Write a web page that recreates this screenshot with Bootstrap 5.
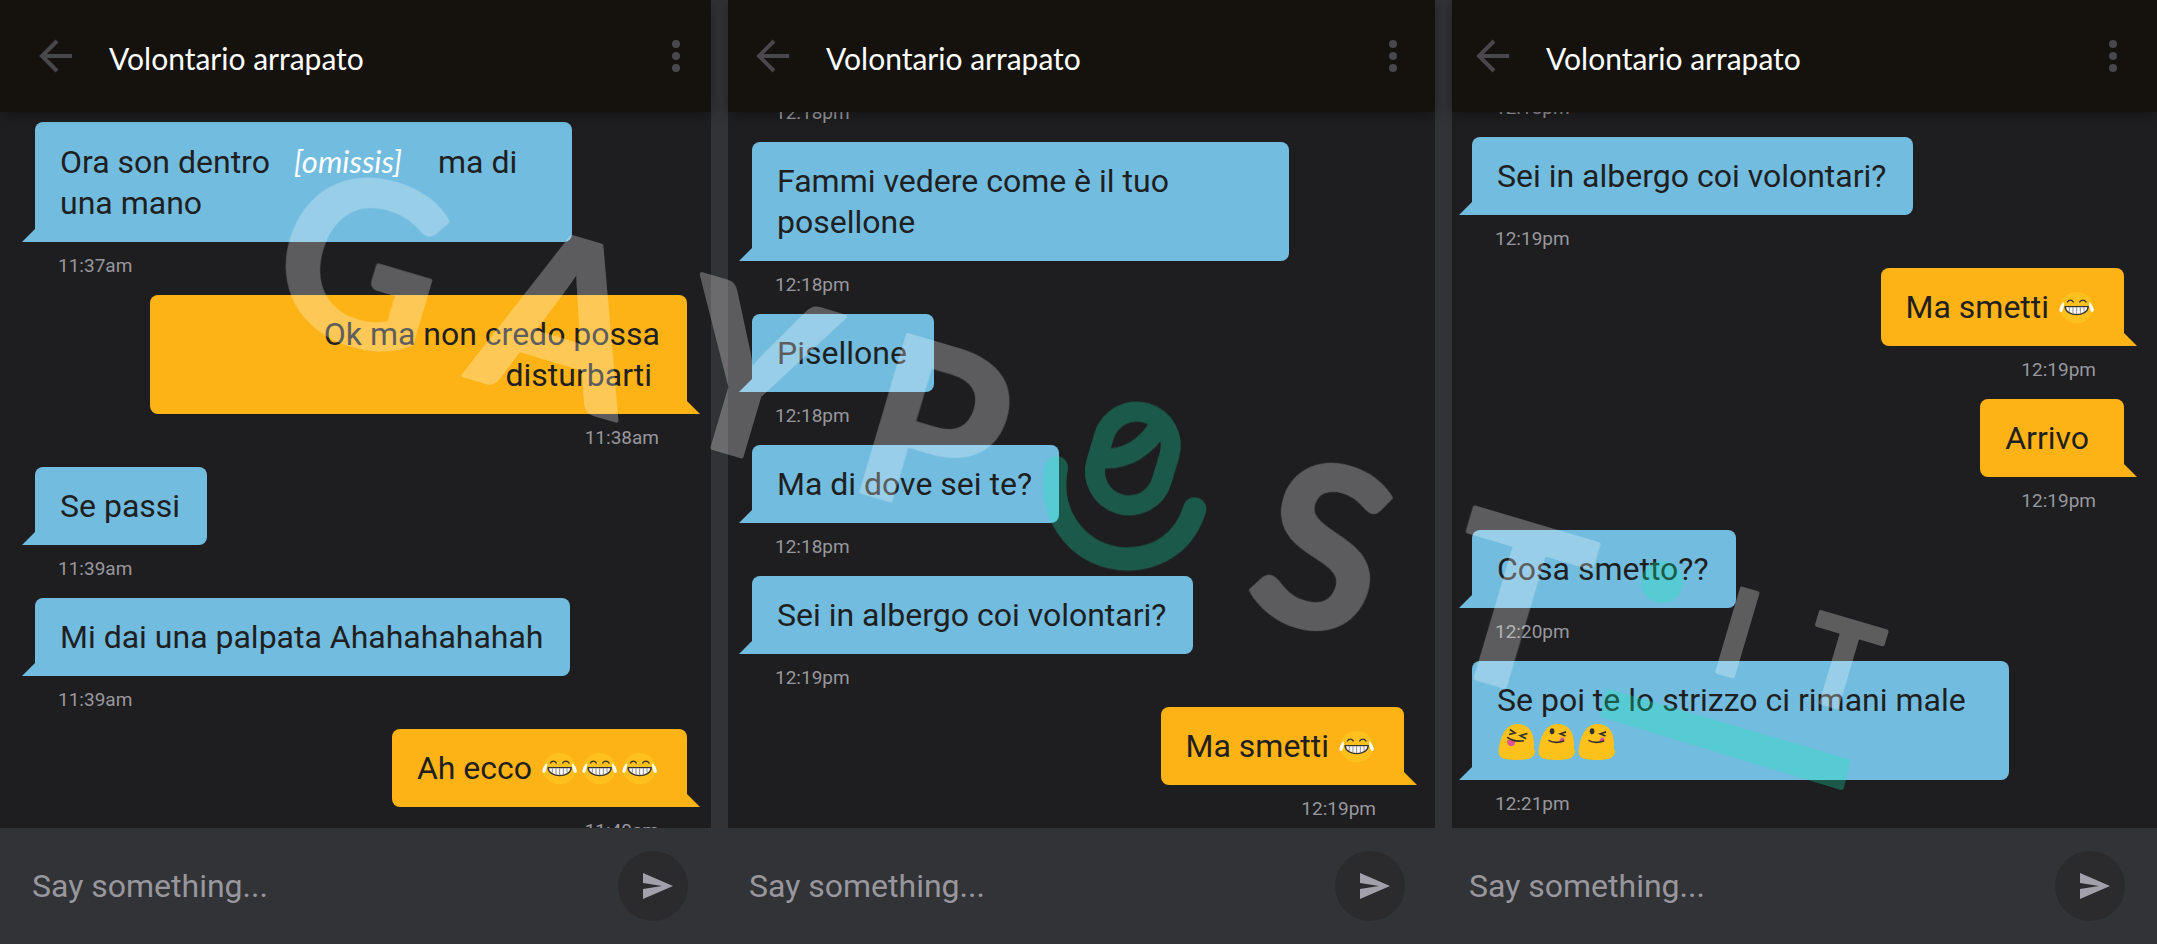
<!DOCTYPE html>
<html lang="it">
<head>
<meta charset="utf-8">
<meta name="viewport" content="width=device-width, initial-scale=1">
<title>Volontario arrapato</title>
<link rel="stylesheet" href="https://cdn.jsdelivr.net/npm/bootstrap@5.3.0/dist/css/bootstrap.min.css">
<style>
  body { background: #323336; font-family: Roboto, "Liberation Sans", sans-serif; color: #1f1f21; }
  .board { display: grid; grid-template-columns: 711fr 707fr 705fr; grid-template-rows: minmax(0, 1fr); column-gap: 17px; height: 100vh; }
  /* each screen has its own side insets and scroll offset */
  .screen { --inset-l: 24px; --inset-r: 31px; --scroll: 10px; background: #1e1e20; min-width: 0; min-height: 0; }
  .screen-a { --inset-l: 35px; --inset-r: 24px; --scroll: 32px; }
  .screen-c { --inset-l: 20px; --inset-r: 33px; --scroll: 5px; }
  .topbar { height: 112px; background: #15120e; padding-left: var(--inset-l); padding-right: var(--inset-r); box-shadow: 0 2px 12px rgba(0,0,0,.35); z-index: 1; }
  .topbar h1 { font: 400 30px/40px Lato, "Open Sans", sans-serif; color: #fff; padding-top: 4px; }
  .icon-btn { border: 0; background: none; padding: 0; line-height: 0; color: #48474c; }
  .back-btn { margin-left: 4px; margin-right: 36px; }
  .more-btn { margin-right: 6px; }
  .thread { min-height: 0; padding-left: var(--inset-l); padding-right: var(--inset-r); }
  .thread-inner { margin-bottom: calc(-1 * var(--scroll)); }
  .bubble { max-width: 537px; padding: 19px 27px 18px 25px; border-radius: 8px; font-size: 32px; line-height: 41px; background: #71bcdf; }
  .bubble::after { content: ""; position: absolute; bottom: 0; left: -13px; width: 13px; height: 13px; background: inherit; clip-path: polygon(100% 0, 100% 100%, 0 100%); }
  .msg-in .bubble { border-bottom-left-radius: 0; }
  .msg-out .bubble { background: #fdb315; border-bottom-right-radius: 0; text-align: right; }
  .msg-out .bubble::after { left: auto; right: -13px; clip-path: polygon(0 0, 100% 100%, 0 100%); }
  .stamp { font-size: 19px; line-height: 24px; margin: 12px 28px 17px 23px; color: #98979d; }
  .omissis { font-family: Lato, sans-serif; font-style: italic; color: #fff; font-size: 31px; margin: 0 28px 0 16px; }
  .emo { width: 40px; height: 36px; vertical-align: -8px; }
  .composer { height: 116px; background: #323336; padding-left: calc(var(--inset-l) - 3px); padding-right: calc(var(--inset-r) - 1px); }
  .composer input, .composer input:focus { background: none; border: 0; box-shadow: none; padding: 0; font-size: 32px; line-height: 40px; color: #98979d; }
  .composer input::placeholder { color: #98979d; opacity: 1; }
  .send-btn { width: 70px; height: 70px; background: #2b2b2d; color: #a2a0aa; padding-left: 10px; }
  .watermark { width: 100%; height: auto; font-family: Lato, sans-serif; font-weight: 700; pointer-events: none; z-index: 2; }
  .wm-white { fill: #fff; stroke: #fff; stroke-width: 4px; stroke-linejoin: round; opacity: .28; }
  .wm-big { font-size: 226px; }
  .wm-small { font-size: 120px; }
  .wm-green { opacity: .29; }
</style>
</head>
<body>
<svg width="0" height="0" class="position-absolute" aria-hidden="true">
  <symbol id="laugh" viewBox="60 32 120 108">
    <ellipse cx="119" cy="85" rx="50" ry="47" fill="#fec01c"/>
    <path d="M90 69Q100 56 110 69M127 69Q138 56 148 69" fill="none" stroke="#38352e" stroke-width="4"/>
    <path d="M84 82H154C151 114 87 114 84 82Z" fill="#fff" stroke="#38352e" stroke-width="4" stroke-linejoin="round"/>
    <path d="M97 84V97M108 84V103M119 84V105M130 84V103M141 84V97" stroke="#55514a" stroke-width="2"/>
    <path d="M79 68C83 74 79 98 72 98C64 97 66 84 79 68ZM158 68C154 74 159 98 166 98C174 97 171 84 158 68Z" fill="#fff"/>
  </symbol>
  <symbol id="blob" viewBox="50 70 120 110">
    <path d="M54 158C55 118 72 70 110 70C151 70 164 101 162 144C162 150 167 151 165 156C162 172 150 180 108 180C66 179 54 173 54 158Z" fill="#fdc11c"/>
  </symbol>
  <symbol id="squint" viewBox="50 70 120 110">
    <use href="#blob" x="50" y="70" width="120" height="110"/>
    <path d="M80 118L104 121Q107 137 92 138Q78 137 80 118Z" fill="#dd5596"/>
    <path d="M88 87L104 97L86 102M142 99L120 106L138 115M80 110Q100 126 131 121" fill="none" stroke="#33302b" stroke-width="5"/>
  </symbol>
  <symbol id="yum" viewBox="50 70 120 110">
    <use href="#blob" x="50" y="70" width="120" height="110"/>
    <path d="M117 122Q119 110 129 111Q137 117 129 124Z" fill="#dd5596"/>
    <ellipse cx="95" cy="92" rx="7" ry="9" fill="#33302b"/>
    <path d="M138 94L120 100L136 107M84 120Q105 132 132 121" fill="none" stroke="#33302b" stroke-width="5"/>
  </symbol>
  <symbol id="back" viewBox="0 0 34 34"><path d="M18 2L3 17L18 32M3 17H33" fill="none" stroke="currentColor" stroke-width="4"/></symbol>
  <symbol id="more" viewBox="0 0 10 34"><g fill="currentColor"><circle cx="5" cy="5" r="4"/><circle cx="5" cy="17" r="4"/><circle cx="5" cy="29" r="4"/></g></symbol>
  <symbol id="send" viewBox="0 0 30 26"><path d="M0 0L30 13L0 26V16L19 13L0 10Z" fill="currentColor"/></symbol>
</svg>

<main class="board position-relative overflow-hidden">
  <section class="screen screen-a d-flex flex-column">
    <header class="topbar d-flex align-items-center flex-shrink-0 position-relative">
      <button class="icon-btn back-btn" type="button" aria-label="Indietro"><svg width="34" height="34"><use href="#back"/></svg></button>
      <h1 class="m-0 flex-grow-1">Volontario arrapato</h1>
      <button class="icon-btn more-btn" type="button" aria-label="Menu"><svg width="10" height="34"><use href="#more"/></svg></button>
    </header>
    <div class="thread flex-grow-1 overflow-hidden d-flex flex-column justify-content-end">
      <div class="thread-inner">
        <div class="msg-in d-flex flex-column align-items-start"><div class="bubble position-relative w-100">Ora son dentro <i class="omissis">[omissis]</i> ma di<br>una mano</div><time class="stamp">11:37am</time></div>
        <div class="msg-out d-flex flex-column align-items-end"><div class="bubble position-relative w-100">Ok ma non credo possa<br>disturbarti&nbsp;</div><time class="stamp">11:38am</time></div>
        <div class="msg-in d-flex flex-column align-items-start"><div class="bubble position-relative">Se passi</div><time class="stamp">11:39am</time></div>
        <div class="msg-in d-flex flex-column align-items-start"><div class="bubble position-relative">Mi dai una palpata Ahahahahahah</div><time class="stamp">11:39am</time></div>
        <div class="msg-out d-flex flex-column align-items-end"><div class="bubble position-relative">Ah ecco <svg class="emo"><use href="#laugh"/></svg><svg class="emo"><use href="#laugh"/></svg><svg class="emo"><use href="#laugh"/></svg></div><time class="stamp">11:40am</time></div>
      </div>
    </div>
    <form class="composer d-flex align-items-center flex-shrink-0">
      <input class="form-control flex-grow-1" type="text" placeholder="Say something..." aria-label="Say something">
      <button class="icon-btn send-btn rounded-circle flex-shrink-0" type="button" aria-label="Invia"><svg width="30" height="26"><use href="#send"/></svg></button>
    </form>
  </section>

  <section class="screen screen-b d-flex flex-column">
    <header class="topbar d-flex align-items-center flex-shrink-0 position-relative">
      <button class="icon-btn back-btn" type="button" aria-label="Indietro"><svg width="34" height="34"><use href="#back"/></svg></button>
      <h1 class="m-0 flex-grow-1">Volontario arrapato</h1>
      <button class="icon-btn more-btn" type="button" aria-label="Menu"><svg width="10" height="34"><use href="#more"/></svg></button>
    </header>
    <div class="thread flex-grow-1 overflow-hidden d-flex flex-column justify-content-end">
      <div class="thread-inner">
        <div class="msg-in d-flex flex-column align-items-start"><time class="stamp">12:18pm</time></div>
        <div class="msg-in d-flex flex-column align-items-start"><div class="bubble position-relative w-100">Fammi vedere come è il tuo<br>posellone</div><time class="stamp">12:18pm</time></div>
        <div class="msg-in d-flex flex-column align-items-start"><div class="bubble position-relative">Pisellone</div><time class="stamp">12:18pm</time></div>
        <div class="msg-in d-flex flex-column align-items-start"><div class="bubble position-relative">Ma di dove sei te?</div><time class="stamp">12:18pm</time></div>
        <div class="msg-in d-flex flex-column align-items-start"><div class="bubble position-relative">Sei in albergo coi volontari?</div><time class="stamp">12:19pm</time></div>
        <div class="msg-out d-flex flex-column align-items-end"><div class="bubble position-relative">Ma smetti <svg class="emo"><use href="#laugh"/></svg></div><time class="stamp">12:19pm</time></div>
      </div>
    </div>
    <form class="composer d-flex align-items-center flex-shrink-0">
      <input class="form-control flex-grow-1" type="text" placeholder="Say something..." aria-label="Say something">
      <button class="icon-btn send-btn rounded-circle flex-shrink-0" type="button" aria-label="Invia"><svg width="30" height="26"><use href="#send"/></svg></button>
    </form>
  </section>

  <section class="screen screen-c d-flex flex-column">
    <header class="topbar d-flex align-items-center flex-shrink-0 position-relative">
      <button class="icon-btn back-btn" type="button" aria-label="Indietro"><svg width="34" height="34"><use href="#back"/></svg></button>
      <h1 class="m-0 flex-grow-1">Volontario arrapato</h1>
      <button class="icon-btn more-btn" type="button" aria-label="Menu"><svg width="10" height="34"><use href="#more"/></svg></button>
    </header>
    <div class="thread flex-grow-1 overflow-hidden d-flex flex-column justify-content-end">
      <div class="thread-inner">
        <div class="msg-in d-flex flex-column align-items-start"><time class="stamp">12:18pm</time></div>
        <div class="msg-in d-flex flex-column align-items-start"><div class="bubble position-relative">Sei in albergo coi volontari?</div><time class="stamp">12:19pm</time></div>
        <div class="msg-out d-flex flex-column align-items-end"><div class="bubble position-relative">Ma smetti <svg class="emo"><use href="#laugh"/></svg></div><time class="stamp">12:19pm</time></div>
        <div class="msg-out d-flex flex-column align-items-end"><div class="bubble position-relative">Arrivo&nbsp;</div><time class="stamp">12:19pm</time></div>
        <div class="msg-in d-flex flex-column align-items-start"><div class="bubble position-relative">Cosa smetto??</div><time class="stamp">12:20pm</time></div>
        <div class="msg-in d-flex flex-column align-items-start"><div class="bubble position-relative w-100">Se poi te lo strizzo ci rimani male<br><svg class="emo"><use href="#squint"/></svg><svg class="emo"><use href="#yum"/></svg><svg class="emo"><use href="#yum"/></svg></div><time class="stamp">12:21pm</time></div>
      </div>
    </div>
    <form class="composer d-flex align-items-center flex-shrink-0">
      <input class="form-control flex-grow-1" type="text" placeholder="Say something..." aria-label="Say something">
      <button class="icon-btn send-btn rounded-circle flex-shrink-0" type="button" aria-label="Invia"><svg width="30" height="26"><use href="#send"/></svg></button>
    </form>
  </section>

  <svg class="watermark position-absolute top-0 start-0" viewBox="0 0 2157 944" aria-hidden="true">
    <g class="wm-white wm-big" text-anchor="middle">
      <text transform="translate(339 339) rotate(16.5)">G</text>
      <text transform="translate(540 398) rotate(16.5)">A</text>
      <text transform="translate(727 452) rotate(16.5)">Y</text>
      <text transform="translate(911 507) rotate(16.5)">P</text>
      <text transform="translate(1300 625) rotate(16.5)">S</text>
      <text transform="translate(1490 683) rotate(16.5)">T</text>
    </g>
    <g class="wm-white wm-small" text-anchor="middle">
      <text transform="translate(1725 674) rotate(16.5)">I</text>
      <text transform="translate(1829 705) rotate(16.5)">T</text>
    </g>
    <!-- smiling logo mark, dot and dash -->
    <g class="wm-green" fill="none" stroke="#16f0b4" stroke-linecap="round">
      <g transform="translate(1030 380) scale(.3333)">
        <path d="M79 263C50 420 160 537 292 537C390 537 465 480 494 387" stroke-width="70"/>
        <path d="M222 168A102 102 0 0 1 418 226L395 303A102 102 0 0 1 199 245ZM215 235C290 240 350 200 385 140" stroke-width="60" stroke-linecap="butt"/>
      </g>
      <circle cx="1662" cy="582" r="21" fill="#16f0b4" stroke="none"/>
      <path d="M1608 692L1847 762L1841 787L1604 715Z" fill="#16f0b4" stroke-width="6" stroke-linejoin="round"/>
    </g>
  </svg>
</main>
<script src="https://cdn.jsdelivr.net/npm/bootstrap@5.3.0/dist/js/bootstrap.bundle.min.js"></script>
</body>
</html>
